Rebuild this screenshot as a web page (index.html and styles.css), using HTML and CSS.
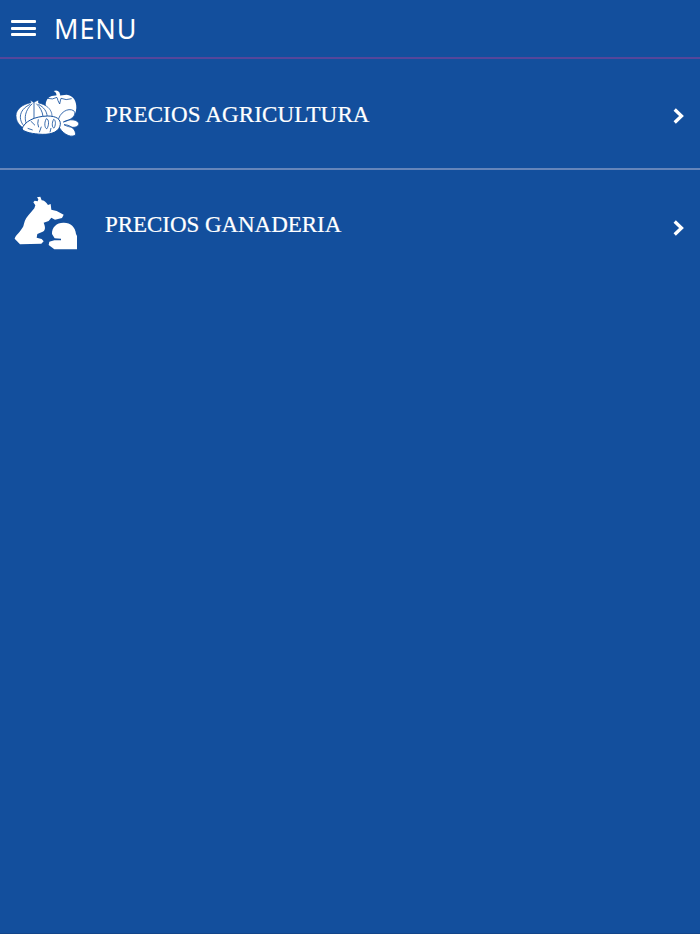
FILE: index.html
```
<!DOCTYPE html>
<html lang="es">
    <head>
        <meta charset="UTF-8">
        <meta name="viewport" content="width=device-width, initial-scale=1.0">
        <title>Menu</title>
        <link rel="stylesheet" href="styles.css">
    </head>
    <body>
        <header class="topbar">
            <div class="burger">
                <span></span>
                <span></span>
                <span></span>
            </div>
            <h1 class="title">MENU</h1>
        </header>
        <nav class="menu">
            <a class="item" href="#">
                <svg class="icon" viewBox="0 0 240 180">
                    <!-- tomato -->
                    <path fill="#fff" d="M113 68C114 47 130 38 150 41L176 38C196 40 206 57 205 78C204 92 199 101 194 107L150 112L120 100Z"/>
                    <path class="line" d="M118 49Q134 54 147 46Q149 56 155 66Q157 56 159 49Q174 56 191 50"/>
                    <path fill="#fff" d="M137 27Q148 22 154 31L157 40L150 48L145 42Q147 32 137 27Z"/>
                    <!-- onion -->
                    <path fill="#fff" stroke="#134f9d" stroke-width="2" d="M66 54L77 61L91 54L92 63C114 68 131 80 132 101C132 127 108 145 79 146C48 145 24 128 24 101C24 81 44 67 69 62Z"/>
                    <path class="line" d="M67 67C29 84 29 119 57 141M73 65C48 87 44 119 67 144M78 56V144M85 65C108 86 113 119 91 144M91 67C126 85 123 119 101 141"/>
                    <!-- carrot -->
                    <path fill="#fff" stroke="#134f9d" stroke-width="2.5" d="M150 118C154 91 180 76 197 86C209 99 188 115 166 120C184 109 210 112 213 126C208 141 184 137 168 128C190 128 206 146 202 160C184 169 160 151 152 132Z"/>
                    <path fill="#fff" stroke="#134f9d" stroke-width="3" d="M42 141C49 119 78 103 119 102C146 102 158 112 157 127C155 148 132 158 103 157C75 156 49 151 42 141Z"/>
                    <path class="line" d="M68 117L81 130M59 139L74 144M91 112Q87 125 92 136M100 134L94 151M115 110C107 124 111 141 117 140C123 130 124 112 115 110M137 112C130 124 133 141 139 137C144 126 143 114 137 112M129 138L126 151"/>
                </svg>
                <span class="label agri">PRECIOS AGRICULTURA</span>
                <svg class="arrow" viewBox="0 0 14 18"><path d="M2.7 2.5L9.5 9L2.7 15.5"/></svg>
            </a>
            <a class="item" href="#">
                <svg class="icon tall" viewBox="0 0 240 198">
                    <!-- cow -->
                    <path fill="#fff" d="M87 22L97 20L101 31C108 31 114 36 120 45L128 42L130 59L146 63L167 74L162 84L141 89L130 83L122 93L107 98C113 112 112 121 104 125L88 132L86 143L101 147L107 154L100 161L36 163L20 146C20 140 41 121 46 109C49 96 51 87 60 77L79 55L82 46L76 37L80 32L89 34L91 28Z"/>
                    <!-- hen -->
                    <path fill="#fff" d="M132 132C131 111 147 97 168 98C188 98 202 111 204 132L207 138V178H139L122 165L124 155L139 151H159V146L140 145Z"/>
                </svg>
                <span class="label gana">PRECIOS GANADERIA</span>
                <svg class="arrow low" viewBox="0 0 14 18"><path d="M2.7 2.5L9.5 9L2.7 15.5"/></svg>
            </a>
        </nav>
    </body>
</html>
```

FILE: styles.css
```
body {
    margin: 0;
    min-height: 100vh;
    box-sizing: border-box;
    background-color: #134f9d;
    border-bottom: 1px solid #12458a;
    color: white;
}
.topbar {
    display: flex;
    align-items: center;
    height: 57px;
    padding-left: 11px;
    border-bottom: 2px solid #55469b;
}
.burger {
    display: flex;
    flex-direction: column;
    gap: 3.5px;
    width: 25px;
    margin-right: 18px;
    margin-bottom: 1px;
}
.burger span {
    height: 3px;
    border-radius: 1px;
    background-color: white;
}
.title {
    margin: 0;
    font-family: "Noto Sans", "Open Sans", sans-serif;
    font-size: 27px;
    font-weight: 400;
    line-height: 57px;
    letter-spacing: 0.9px;
}
.item {
    display: flex;
    align-items: center;
    height: 109px;
    padding: 0 14px 0 8px;
    color: white;
    text-decoration: none;
}
.item + .item {
    border-top: 2px solid #6585ba;
}
.icon {
    width: 80px;
    height: 60px;
    margin-right: 17px;
    margin-bottom: 3px;
}
.tall {
    height: 66px;
}
.line {
    fill: none;
    stroke: #134f9d;
    stroke-width: 2.5;
}
.label {
    flex: 1;
    font-family: "Liberation Serif", "Times New Roman", serif;
    font-size: 23px;
    white-space: nowrap;
    -webkit-text-stroke: 0.2px white;
}
.agri {
    margin-top: 2px;
    letter-spacing: 0.15px;
}
.gana {
    letter-spacing: -0.05px;
}
.arrow {
    width: 14px;
    height: 18px;
    margin-top: 5px;
}
.low {
    margin-top: 7px;
}
.arrow path {
    fill: none;
    stroke: white;
    stroke-width: 3.3;
}
```
